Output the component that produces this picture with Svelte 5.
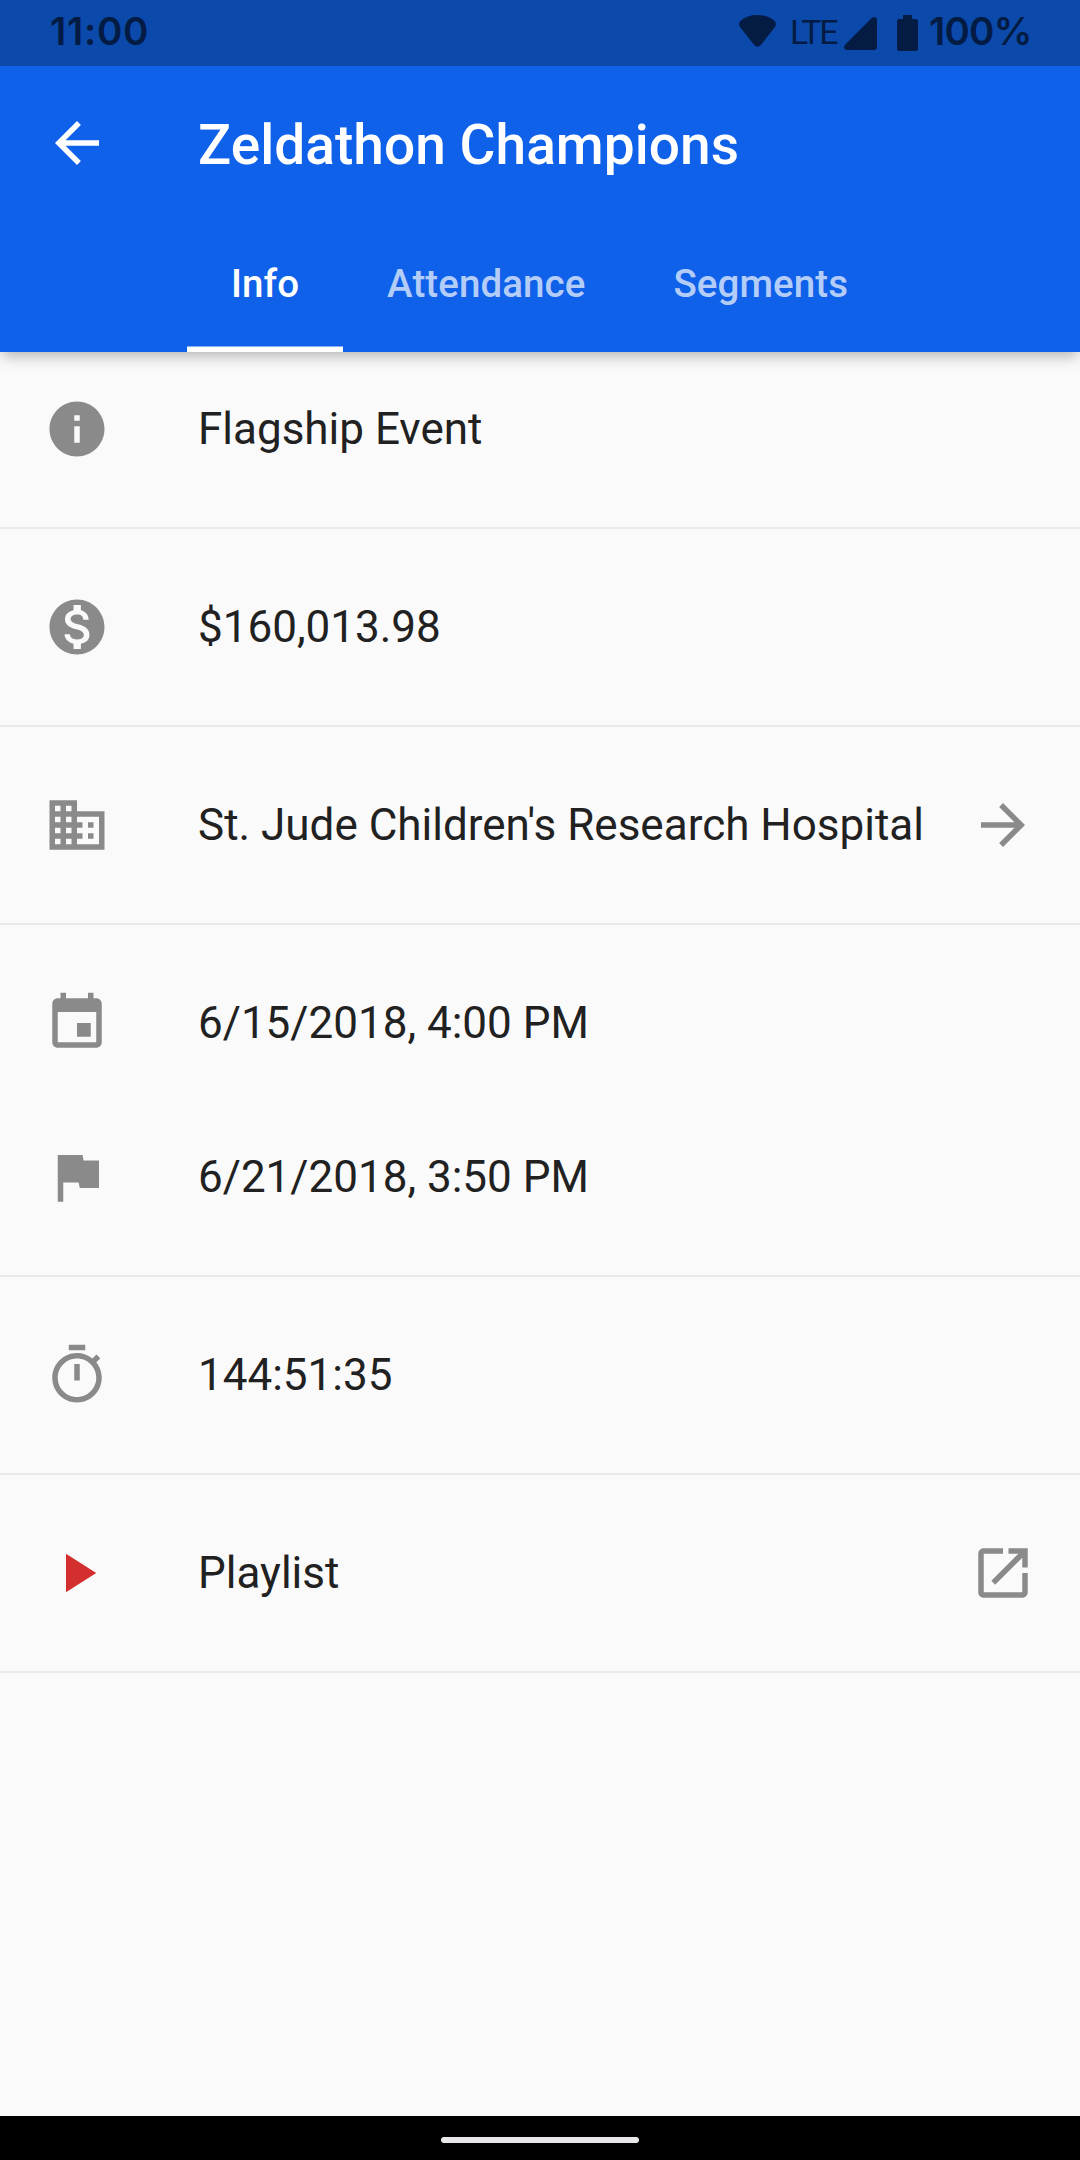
<script>
  const tabs = ['Info', 'Attendance', 'Segments'];
  let active = $state(0);

  const icons = {
    back: 'M20 11H7.83l5.59-5.59L12 4l-8 8 8 8 1.41-1.41L7.83 13H20v-2z',
    forward: 'M12 4l-1.41 1.41L16.17 11H4v2h12.17l-5.58 5.59L12 20l8-8z',
    info: 'M12 2C6.48 2 2 6.48 2 12s4.48 10 10 10 10-4.48 10-10S17.52 2 12 2zm1 15h-2v-6h2v6zm0-8h-2V7h2v2z',
    money: 'M12 2C6.48 2 2 6.48 2 12s4.48 10 10 10 10-4.48 10-10S17.52 2 12 2zm1.41 16.09V20h-2.67v-1.93c-1.71-.36-3.16-1.46-3.27-3.4h1.96c.1 1.05.82 1.87 2.65 1.87 1.96 0 2.4-.98 2.4-1.59 0-.83-.44-1.61-2.67-2.14-2.48-.6-4.18-1.62-4.18-3.67 0-1.72 1.39-2.84 3.11-3.21V4h2.67v1.95c1.86.45 2.79 1.86 2.85 3.39H14.3c-.05-1.11-.64-1.87-2.22-1.87-1.5 0-2.4.68-2.4 1.64 0 .84.65 1.39 2.67 1.91s4.18 1.39 4.18 3.91c-.01 1.83-1.38 2.83-3.12 3.16z',
    building: 'M12 7V3H2v18h20V7H12zM6 19H4v-2h2v2zm0-4H4v-2h2v2zm0-4H4V9h2v2zm0-4H4V5h2v2zm4 12H8v-2h2v2zm0-4H8v-2h2v2zm0-4H8V9h2v2zm0-4H8V5h2v2zm10 12h-8v-2h2v-2h-2v-2h2v-2h-2V9h8v10zm-2-8h-2v2h2v-2zm0 4h-2v2h2v-2z',
    event: 'M17 12h-5v5h5v-5zM16 1v2H8V1H6v2H5c-1.11 0-1.99.9-1.99 2L3 19c0 1.1.89 2 2 2h14c1.1 0 2-.9 2-2V5c0-1.1-.9-2-2-2h-1V1h-2zm3 18H5V8h14v11z',
    flag: 'M14.4 6L14 4H5v17h2v-7h5.6l.4 2h7V6z',
    timer: 'M15 1H9v2h6V1zm-4 13h2V8h-2v6zm8.03-6.61l1.42-1.42c-.43-.51-.9-.99-1.41-1.41l-1.42 1.42C16.07 4.74 14.12 4 12 4c-4.97 0-9 4.03-9 9s4.02 9 9 9 9-4.03 9-9c0-2.12-.74-4.07-1.97-5.61zM12 20c-3.87 0-7-3.13-7-7s3.13-7 7-7 7 3.13 7 7-3.13 7-7 7z',
    play: 'M8 5v14l11-7z',
    open: 'M19 19H5V5h7V3H5c-1.11 0-2 .9-2 2v14c0 1.1.89 2 2 2h14c1.1 0 2-.9 2-2v-7h-2v7zM14 3v2h3.59l-9.83 9.83 1.41 1.41L19 6.41V10h2V3h-7z'
  };

  const sections = [
    [{ icon: 'info', text: 'Flagship Event' }],
    [{ icon: 'money', text: '$160,013.98' }],
    [{ icon: 'building', text: "St. Jude Children's Research Hospital", trailing: 'forward' }],
    [
      { icon: 'event', text: '6/15/2018, 4:00 PM' },
      { icon: 'flag', text: '6/21/2018, 3:50 PM' }
    ],
    [{ icon: 'timer', text: '144:51:35' }],
    [{ icon: 'play', text: 'Playlist', trailing: 'open', red: true }]
  ];
</script>

{#snippet icon(name, red = false)}
  <svg class="icon" class:red viewBox="0 0 24 24" aria-hidden="true"><path d={icons[name]} /></svg>
{/snippet}

<div class="screen">
  <div class="status">
    <span class="clock">11:00</span>
    <div class="indicators">
      <svg class="wifi" viewBox="0 0 37 32" aria-hidden="true">
        <path d="M18.500 0C11.500 0 6 2 1.600 5.800Q-1 8.500 1 12L15 29.800Q18.500 33.500 22 29.800L36 12Q38 8.500 35.400 5.800C31 2 25.500 0 18.500 0Z" />
      </svg>
      <span class="lte">LTE</span>
      <svg class="signal" viewBox="0 0 33 33" aria-hidden="true">
        <path d="M27.500 1.300Q29 0 31 0Q33 .4 33 3V30Q33 33 30 33H3Q.5 33 0 30.500Q0 28.800 1.300 27.500Z" />
      </svg>
      <svg class="battery" viewBox="0 0 21 36" aria-hidden="true">
        <path d="M6 0H15V4H18.500Q21 4 21 6.500V33.500Q21 36 18.500 36H2.500Q0 36 0 33.500V6.500Q0 4 2.500 4H6Z" />
      </svg>
      <span class="percent">100%</span>
    </div>
  </div>

  <header>
    <div class="toolbar">
      {@render icon('back')}
      <h1>Zeldathon Champions</h1>
    </div>
    <nav>
      {#each tabs as tab, i}
        <button class:active={active === i} onclick={() => (active = i)}>{tab}</button>
      {/each}
    </nav>
  </header>

  <main>
    {#each sections as rows}
      <section>
        {#each rows as row}
          <div class="row">
            {@render icon(row.icon, row.red)}
            <span class="label">{row.text}</span>
            {#if row.trailing}{@render icon(row.trailing)}{/if}
          </div>
        {/each}
      </section>
    {/each}
  </main>

  <footer><div class="handle"></div></footer>
</div>

<style>
  :global(body) {
    margin: 0;
  }

  .screen {
    width: 1080px;
    height: 2160px;
    display: flex;
    flex-direction: column;
    overflow: hidden;
    background: #fafafa;
    color: #212121;
    font-family: Roboto, sans-serif;
  }

  .status {
    position: relative;
    z-index: 1;
    height: 66px;
    flex: none;
    box-sizing: border-box;
    padding: 0 52px 0 50px;
    display: flex;
    justify-content: space-between;
    background: #0b49ab;
    color: #041c43;
  }

  .clock,
  .percent {
    font: 600 38.5px/63px Inter, sans-serif;
    white-space: nowrap;
  }

  .clock {
    letter-spacing: 0.7px;
  }

  .percent {
    width: 99px;
    margin-left: 11px;
    letter-spacing: -0.8px;
  }

  .indicators {
    display: flex;
    align-items: flex-start;
  }

  .indicators svg {
    fill: currentColor;
  }

  .wifi {
    width: 37px;
    height: 32px;
    margin-top: 15px;
  }

  .lte {
    width: 52px;
    margin-left: 14px;
    font-size: 34px;
    line-height: 65px;
    letter-spacing: -2.4px;
  }

  .signal {
    width: 33px;
    height: 33px;
    margin-top: 17px;
    margin-left: 2px;
  }

  .battery {
    width: 21px;
    height: 36px;
    margin-top: 15px;
    margin-left: 20px;
  }

  header {
    position: relative;
    height: 286px;
    flex: none;
    background: #1061e9;
    color: #fff;
    box-shadow:
      0 5.500px 11px -2.750px rgba(0, 0, 0, 0.2),
      0 11px 13.750px 0 rgba(0, 0, 0, 0.04),
      0 2.750px 22px 0 rgba(0, 0, 0, 0.07);
  }

  .toolbar {
    height: 154px;
    padding: 0 44px;
    display: flex;
    align-items: center;
    gap: 88px;
  }

  .icon {
    width: 66px;
    height: 66px;
    flex: none;
    fill: #8a8a8a;
  }

  .toolbar .icon {
    fill: #fff;
  }

  .icon.red {
    fill: #d32f2f;
  }

  h1 {
    margin: 0;
    padding-top: 3px;
    font-size: 55px;
    font-weight: 500;
    line-height: 66px;
    letter-spacing: 0.05px;
    white-space: nowrap;
  }

  nav {
    height: 132px;
    padding-left: 187px;
    display: flex;
  }

  button {
    padding: 0 44px 4px;
    border: 0;
    background: none;
    color: rgba(255, 255, 255, 0.7);
    font: 500 38.5px/46px Roboto, sans-serif;
    letter-spacing: 0.08px;
    white-space: nowrap;
  }

  button.active {
    box-shadow: inset 0 -5.5px #fff;
    color: #fff;
  }

  main {
    flex: 1;
  }

  section {
    padding: 21px 0;
    border-bottom: 2px solid #eaeaea;
  }

  section:first-child {
    padding-top: 0;
  }

  .row {
    height: 154px;
    padding: 0 44px;
    display: flex;
    align-items: center;
    gap: 44px;
  }

  .label {
    flex: 1;
    padding-left: 44px;
    font-size: 44px;
    line-height: 52px;
    white-space: nowrap;
  }

  footer {
    height: 44px;
    flex: none;
    display: flex;
    align-items: center;
    justify-content: center;
    padding-top: 4px;
    box-sizing: border-box;
    background: #000;
  }

  .handle {
    width: 198px;
    height: 6px;
    border-radius: 3px;
    background: #e8e6e8;
  }
</style>
